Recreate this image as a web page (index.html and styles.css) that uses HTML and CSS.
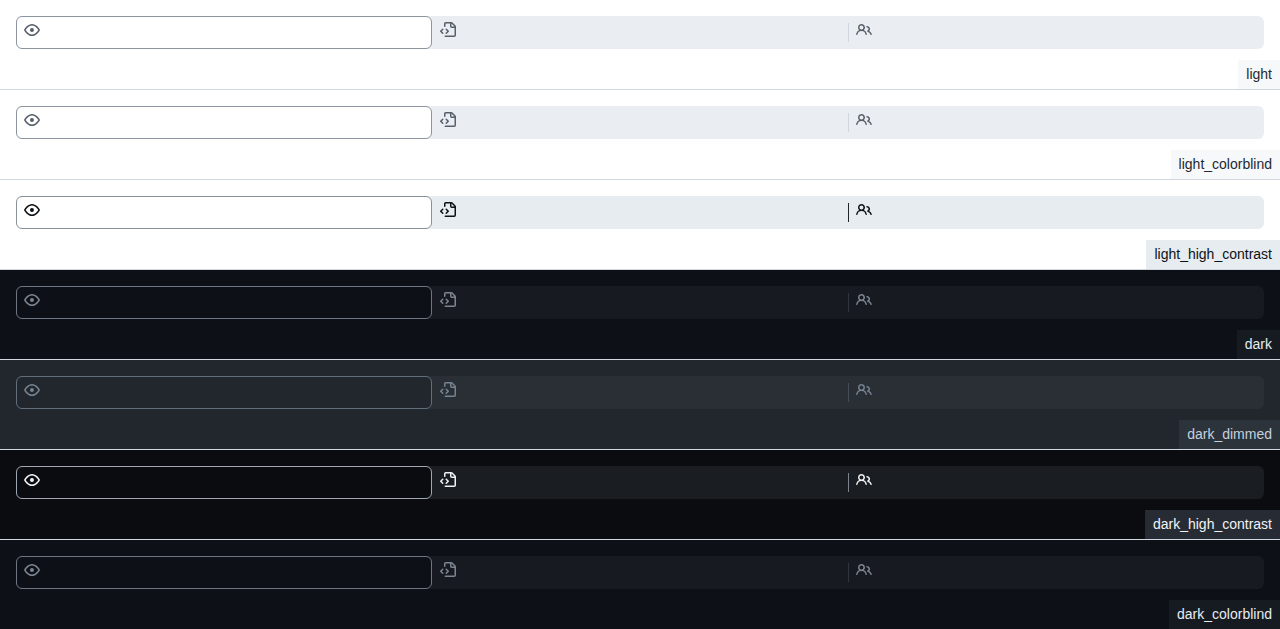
FILE: index.html
```html
<!DOCTYPE html>
<html lang="en">
<head>
<meta charset="utf-8">
<meta name="viewport" content="width=device-width, initial-scale=1">
<title>Segmented control themes</title>
<link rel="stylesheet" href="styles.css">
</head>
<body>
<svg class="sprite" aria-hidden="true">
  <symbol id="eye" viewBox="0 0 16 16"><path d="M8 2c1.981 0 3.671.992 4.933 2.078 1.27 1.091 2.187 2.345 2.637 3.023a1.62 1.62 0 0 1 0 1.798c-.45.678-1.367 1.932-2.637 3.023C11.67 13.008 9.981 14 8 14c-1.981 0-3.671-.992-4.933-2.078C1.797 10.83.88 9.576.43 8.898a1.62 1.62 0 0 1 0-1.798c.45-.677 1.367-1.931 2.637-3.022C4.33 2.992 6.019 2 8 2ZM1.679 7.932a.12.12 0 0 0 0 .136c.411.622 1.241 1.75 2.366 2.717C5.176 11.758 6.527 12.5 8 12.5c1.473 0 2.825-.742 3.955-1.715 1.124-.967 1.954-2.096 2.366-2.717a.12.12 0 0 0 0-.136c-.412-.621-1.242-1.75-2.366-2.717C10.824 4.242 9.473 3.5 8 3.5c-1.473 0-2.825.742-3.955 1.715-1.124.967-1.954 2.096-2.366 2.717ZM8 10a2 2 0 1 1-.001-3.999A2 2 0 0 1 8 10Z"/></symbol>
  <symbol id="file-code" viewBox="0 0 16 16"><path d="M4 1.75C4 .784 4.784 0 5.75 0h5.586c.464 0 .909.184 1.237.513l2.914 2.914c.329.328.513.773.513 1.237v8.586A1.75 1.75 0 0 1 14.25 15h-9a.75.75 0 0 1 0-1.5h9a.25.25 0 0 0 .25-.25V6h-2.75A1.75 1.75 0 0 1 10 4.25V1.5H5.75a.25.25 0 0 0-.25.25v2.5a.75.75 0 0 1-1.5 0Zm1.72 4.97a.75.75 0 0 1 1.06 0l2 2a.75.75 0 0 1 0 1.06l-2 2a.749.749 0 0 1-1.275-.326.749.749 0 0 1 .215-.734l1.47-1.47-1.47-1.47a.75.75 0 0 1 0-1.06ZM3.28 7.78 1.81 9.25l1.47 1.47a.751.751 0 0 1-.018 1.042.751.751 0 0 1-1.042.018l-2-2a.75.75 0 0 1 0-1.06l2-2a.751.751 0 0 1 1.042.018.751.751 0 0 1 .018 1.042Zm8.22-6.218V4.25c0 .138.112.25.25.25h2.688l-.011-.013-2.914-2.914-.013-.011Z"/></symbol>
  <symbol id="people" viewBox="0 0 16 16"><path d="M2 5.5a3.5 3.5 0 1 1 5.898 2.549 5.508 5.508 0 0 1 3.034 4.084.75.75 0 1 1-1.482.235 4 4 0 0 0-7.9 0 .75.75 0 0 1-1.482-.236A5.507 5.507 0 0 1 3.102 8.05 3.493 3.493 0 0 1 2 5.5ZM11 4a3.001 3.001 0 0 1 2.22 5.018 5.01 5.01 0 0 1 2.56 3.012.749.749 0 0 1-.885.954.752.752 0 0 1-.549-.514 3.507 3.507 0 0 0-2.522-2.372.75.75 0 0 1-.574-.73v-.352a.75.75 0 0 1 .416-.672A1.5 1.5 0 0 0 11 5.5.75.75 0 0 1 11 4Zm-5.5-.5a2 2 0 1 0-.001 3.999A2 2 0 0 0 5.5 3.5Z"/></symbol>
</svg>
<main>
  <section class="theme light">
    <div class="segments" role="group" aria-label="File view">
      <button class="segment selected" type="button" aria-label="Preview" aria-pressed="true"><svg class="icon"><use href="#eye"/></svg></button>
      <button class="segment" type="button" aria-label="Raw" aria-pressed="false"><svg class="icon"><use href="#file-code"/></svg></button>
      <button class="segment divided" type="button" aria-label="Blame" aria-pressed="false"><svg class="icon"><use href="#people"/></svg></button>
    </div>
    <p class="name">light</p>
  </section>
  <section class="theme light">
    <div class="segments" role="group" aria-label="File view">
      <button class="segment selected" type="button" aria-label="Preview" aria-pressed="true"><svg class="icon"><use href="#eye"/></svg></button>
      <button class="segment" type="button" aria-label="Raw" aria-pressed="false"><svg class="icon"><use href="#file-code"/></svg></button>
      <button class="segment divided" type="button" aria-label="Blame" aria-pressed="false"><svg class="icon"><use href="#people"/></svg></button>
    </div>
    <p class="name">light_colorblind</p>
  </section>
  <section class="theme light-high-contrast">
    <div class="segments" role="group" aria-label="File view">
      <button class="segment selected" type="button" aria-label="Preview" aria-pressed="true"><svg class="icon"><use href="#eye"/></svg></button>
      <button class="segment" type="button" aria-label="Raw" aria-pressed="false"><svg class="icon"><use href="#file-code"/></svg></button>
      <button class="segment divided" type="button" aria-label="Blame" aria-pressed="false"><svg class="icon"><use href="#people"/></svg></button>
    </div>
    <p class="name">light_high_contrast</p>
  </section>
  <section class="theme dark">
    <div class="segments" role="group" aria-label="File view">
      <button class="segment selected" type="button" aria-label="Preview" aria-pressed="true"><svg class="icon"><use href="#eye"/></svg></button>
      <button class="segment" type="button" aria-label="Raw" aria-pressed="false"><svg class="icon"><use href="#file-code"/></svg></button>
      <button class="segment divided" type="button" aria-label="Blame" aria-pressed="false"><svg class="icon"><use href="#people"/></svg></button>
    </div>
    <p class="name">dark</p>
  </section>
  <section class="theme dark-dimmed">
    <div class="segments" role="group" aria-label="File view">
      <button class="segment selected" type="button" aria-label="Preview" aria-pressed="true"><svg class="icon"><use href="#eye"/></svg></button>
      <button class="segment" type="button" aria-label="Raw" aria-pressed="false"><svg class="icon"><use href="#file-code"/></svg></button>
      <button class="segment divided" type="button" aria-label="Blame" aria-pressed="false"><svg class="icon"><use href="#people"/></svg></button>
    </div>
    <p class="name">dark_dimmed</p>
  </section>
  <section class="theme dark-high-contrast">
    <div class="segments" role="group" aria-label="File view">
      <button class="segment selected" type="button" aria-label="Preview" aria-pressed="true"><svg class="icon"><use href="#eye"/></svg></button>
      <button class="segment" type="button" aria-label="Raw" aria-pressed="false"><svg class="icon"><use href="#file-code"/></svg></button>
      <button class="segment divided" type="button" aria-label="Blame" aria-pressed="false"><svg class="icon"><use href="#people"/></svg></button>
    </div>
    <p class="name">dark_high_contrast</p>
  </section>
  <section class="theme dark">
    <div class="segments" role="group" aria-label="File view">
      <button class="segment selected" type="button" aria-label="Preview" aria-pressed="true"><svg class="icon"><use href="#eye"/></svg></button>
      <button class="segment" type="button" aria-label="Raw" aria-pressed="false"><svg class="icon"><use href="#file-code"/></svg></button>
      <button class="segment divided" type="button" aria-label="Blame" aria-pressed="false"><svg class="icon"><use href="#people"/></svg></button>
    </div>
    <p class="name">dark_colorblind</p>
  </section>
</main>
</body>
</html>
```
FILE: styles.css
```css
* {
  box-sizing: border-box;
}

body {
  margin: 0;
  font: 14px/21px "Liberation Sans", Arial, sans-serif;
}

.sprite {
  display: none;
}

.theme {
  display: flex;
  flex-direction: column;
  gap: 11px;
  padding-top: 16px;
  border-bottom: 1px solid #d0d7de;
  background: var(--canvas);
}

.theme:last-child {
  border-bottom: 0;
}

.segments {
  display: grid;
  grid-template-columns: repeat(3, 1fr);
  margin: 0 16px;
  border-radius: 6px;
  background: var(--track);
}

.segment {
  display: flex;
  align-items: flex-start;
  height: 33px;
  margin: 0;
  padding: 6px 8px;
  border: 0;
  border-radius: 6px;
  background: none;
  color: var(--icon);
  cursor: pointer;
}

.selected {
  padding: 5px 7px;
  border: 1px solid var(--outline);
  background: var(--canvas);
}

.divided {
  border-radius: 0;
  background: linear-gradient(var(--divider), var(--divider)) left center / 1px 19px no-repeat;
}

.icon {
  width: 16px;
  height: 16px;
  fill: currentColor;
}

.name {
  align-self: flex-end;
  margin: 0;
  padding: 4px 8px;
  background: var(--name-bg);
  color: var(--text);
}

.light {
  --canvas: #ffffff;
  --track: #eaeef2;
  --outline: #8c959f;
  --divider: #d0d7de;
  --icon: #57606a;
  --name-bg: #f6f8fa;
  --text: #24292f;
}

.light-high-contrast {
  --canvas: #ffffff;
  --track: #e7ecf0;
  --outline: #88929d;
  --divider: #20252c;
  --icon: #0e1116;
  --name-bg: #e7ecf0;
  --text: #0e1116;
}

.dark {
  --canvas: #0d1117;
  --track: #171b21;
  --outline: #6e7681;
  --divider: #30363d;
  --icon: #7d8590;
  --name-bg: #161b22;
  --text: #e6edf3;
}

.dark-dimmed {
  --canvas: #22272e;
  --track: #2a2f36;
  --outline: #636e7b;
  --divider: #444c56;
  --icon: #768390;
  --name-bg: #2d333b;
  --text: #c5d1de;
}

.dark-high-contrast {
  --canvas: #0a0c10;
  --track: #1a1d21;
  --outline: #9ea7b3;
  --divider: #7a828e;
  --icon: #f0f3f6;
  --name-bg: #272b33;
  --text: #f0f3f6;
}
```
